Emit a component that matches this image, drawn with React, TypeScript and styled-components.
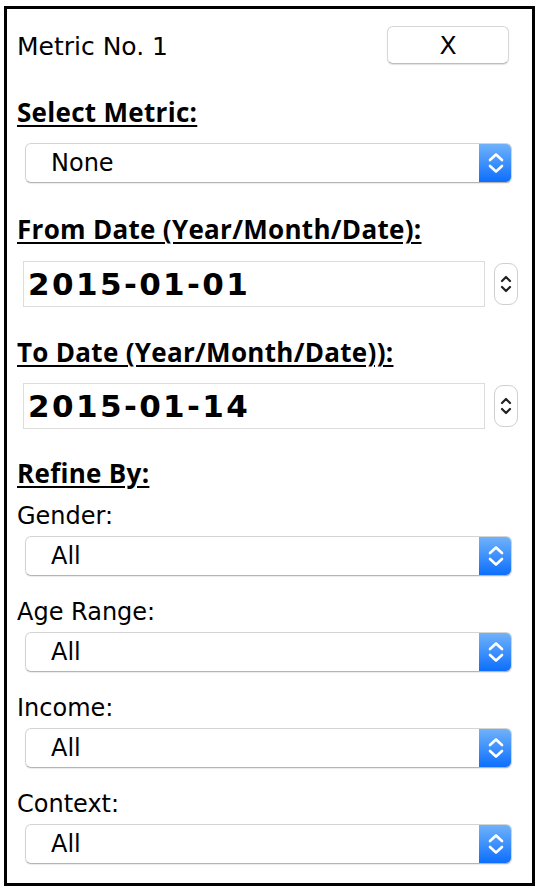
import React from 'react'
import styled, { createGlobalStyle } from 'styled-components'

const GlobalStyle = createGlobalStyle`
    html, body {
        margin: 0;
        padding: 0;
        background: #ffffff;
    }
    body {
        font-family: "DejaVu Sans", "Liberation Sans", sans-serif;
        color: #000000;
    }
`

const Panel = styled.div`
    box-sizing: border-box;
    width: 531px;
    height: 880px;
    margin: 6px 0 0 4px;
    border: 3px solid #000000;
    padding: 17px 20px 0 10px;
    display: flex;
    flex-direction: column;
`

const Header = styled.div`
    display: flex;
    align-items: center;
    justify-content: space-between;
    height: 38px;
    padding-right: 3px;
`

const Title = styled.div`
    font-size: 25px;
    line-height: 30px;
    margin-top: 4px;
`

const CloseButton = styled.button`
    box-sizing: border-box;
    width: 122px;
    height: 38px;
    background: #ffffff;
    border: 1px solid #d6d6d6;
    border-bottom-color: #bdbdbd;
    border-radius: 6px;
    box-shadow: 0 1px 1px rgba(0, 0, 0, 0.12);
    font-family: "DejaVu Sans", sans-serif;
    font-size: 25px;
    color: #000000;
    padding: 0;
`

const SectionLabel = styled.div<{ $gap: number }>`
    margin-top: ${(p) => p.$gap}px;
    font-family: "Open Sans", "DejaVu Sans", sans-serif;
    font-weight: 700;
    font-size: 26px;
    line-height: 30px;
    letter-spacing: 0.3px;
    text-decoration: underline;
    text-decoration-thickness: 2px;
    text-underline-offset: 3px;
`

const FieldLabel = styled.div<{ $gap: number }>`
    margin-top: ${(p) => p.$gap}px;
    font-size: 24px;
    line-height: 30px;
`

const SelectBox = styled.div<{ $gap: number }>`
    box-sizing: border-box;
    display: flex;
    height: 40px;
    margin: ${(p) => p.$gap}px 0 0 8px;
    border: 1px solid #d4d4d4;
    border-bottom-color: #b4b4b4;
    border-radius: 6px;
    box-shadow: 0 1px 1px rgba(0, 0, 0, 0.08);
    overflow: hidden;
    background: #ffffff;
`

const NativeSelect = styled.select`
    flex: 1;
    appearance: none;
    border: none;
    outline: none;
    background: transparent;
    font-family: "DejaVu Sans", sans-serif;
    font-size: 24px;
    color: #000000;
    padding: 0 0 0 25px;
    margin: 0;
`

const SelectArrow = styled.div`
    width: 33px;
    flex: none;
    margin: -1px -1px -1px 0;
    background: linear-gradient(#72b4fb, #0a6dfd);
    display: flex;
    align-items: center;
    justify-content: center;
`

const DateRow = styled.div<{ $gap: number }>`
    display: flex;
    align-items: center;
    margin: ${(p) => p.$gap}px -12px 0 6px;
    gap: 9px;
`

const DateInput = styled.input`
    box-sizing: border-box;
    flex: none;
    width: 462px;
    height: 46px;
    border: 1px solid #dcdcdc;
    background: #ffffff;
    outline: none;
    padding: 0 0 0 4px;
    margin: 0;
    font-family: "DejaVu Sans", sans-serif;
    font-weight: 700;
    font-size: 31px;
    letter-spacing: 2.4px;
    color: #000000;
`

const Spinner = styled.div`
    box-sizing: border-box;
    flex: none;
    width: 24px;
    height: 42px;
    border: 1px solid #cfcfcf;
    border-radius: 9px;
    background: #ffffff;
    display: flex;
    align-items: center;
    justify-content: center;
`

function BlueChevrons() {
    return (
        <svg width="16" height="24" viewBox="0 0 16 24">
            <path d="M2 9 L8 3.5 L14 9" fill="none" stroke="#ffffff" strokeWidth="2.6" strokeLinecap="round" strokeLinejoin="round" />
            <path d="M2 15 L8 20.5 L14 15" fill="none" stroke="#ffffff" strokeWidth="2.6" strokeLinecap="round" strokeLinejoin="round" />
        </svg>
    )
}

function SpinChevrons() {
    return (
        <svg width="14" height="26" viewBox="0 0 14 26">
            <path d="M3 10 L7 6 L11 10" fill="none" stroke="#222222" strokeWidth="2.2" strokeLinecap="round" strokeLinejoin="round" />
            <path d="M3 16 L7 20 L11 16" fill="none" stroke="#222222" strokeWidth="2.2" strokeLinecap="round" strokeLinejoin="round" />
        </svg>
    )
}

function Dropdown({ value, gap }: { value: string; gap: number }) {
    return (
        <SelectBox $gap={gap}>
            <NativeSelect value={value} onChange={() => undefined}>
                <option value={value}>{value}</option>
            </NativeSelect>
            <SelectArrow>
                <BlueChevrons />
            </SelectArrow>
        </SelectBox>
    )
}

function DateField({ value, gap }: { value: string; gap: number }) {
    return (
        <DateRow $gap={gap}>
            <DateInput type="text" value={value} readOnly />
            <Spinner>
                <SpinChevrons />
            </Spinner>
        </DateRow>
    )
}

const refineFields = ['Gender:', 'Age Range:', 'Income:', 'Context:']

export default function App() {
    return (
        <>
            <GlobalStyle />
            <Panel>
                <Header>
                    <Title>Metric No. 1</Title>
                    <CloseButton>X</CloseButton>
                </Header>
                <SectionLabel $gap={33}>Select Metric:</SectionLabel>
                <Dropdown value="None" gap={16} />
                <SectionLabel $gap={31}>From Date (Year/Month/Date):</SectionLabel>
                <DateField value="2015-01-01" gap={17} />
                <SectionLabel $gap={30}>To Date (Year/Month/Date)):</SectionLabel>
                <DateField value="2015-01-14" gap={16} />
                <SectionLabel $gap={29}>Refine By:</SectionLabel>
                {refineFields.map((label, i) => (
                    <React.Fragment key={label}>
                        <FieldLabel $gap={i === 0 ? 13 : 21}>{label}</FieldLabel>
                        <Dropdown value="All" gap={5} />
                    </React.Fragment>
                ))}
            </Panel>
        </>
    )
}
